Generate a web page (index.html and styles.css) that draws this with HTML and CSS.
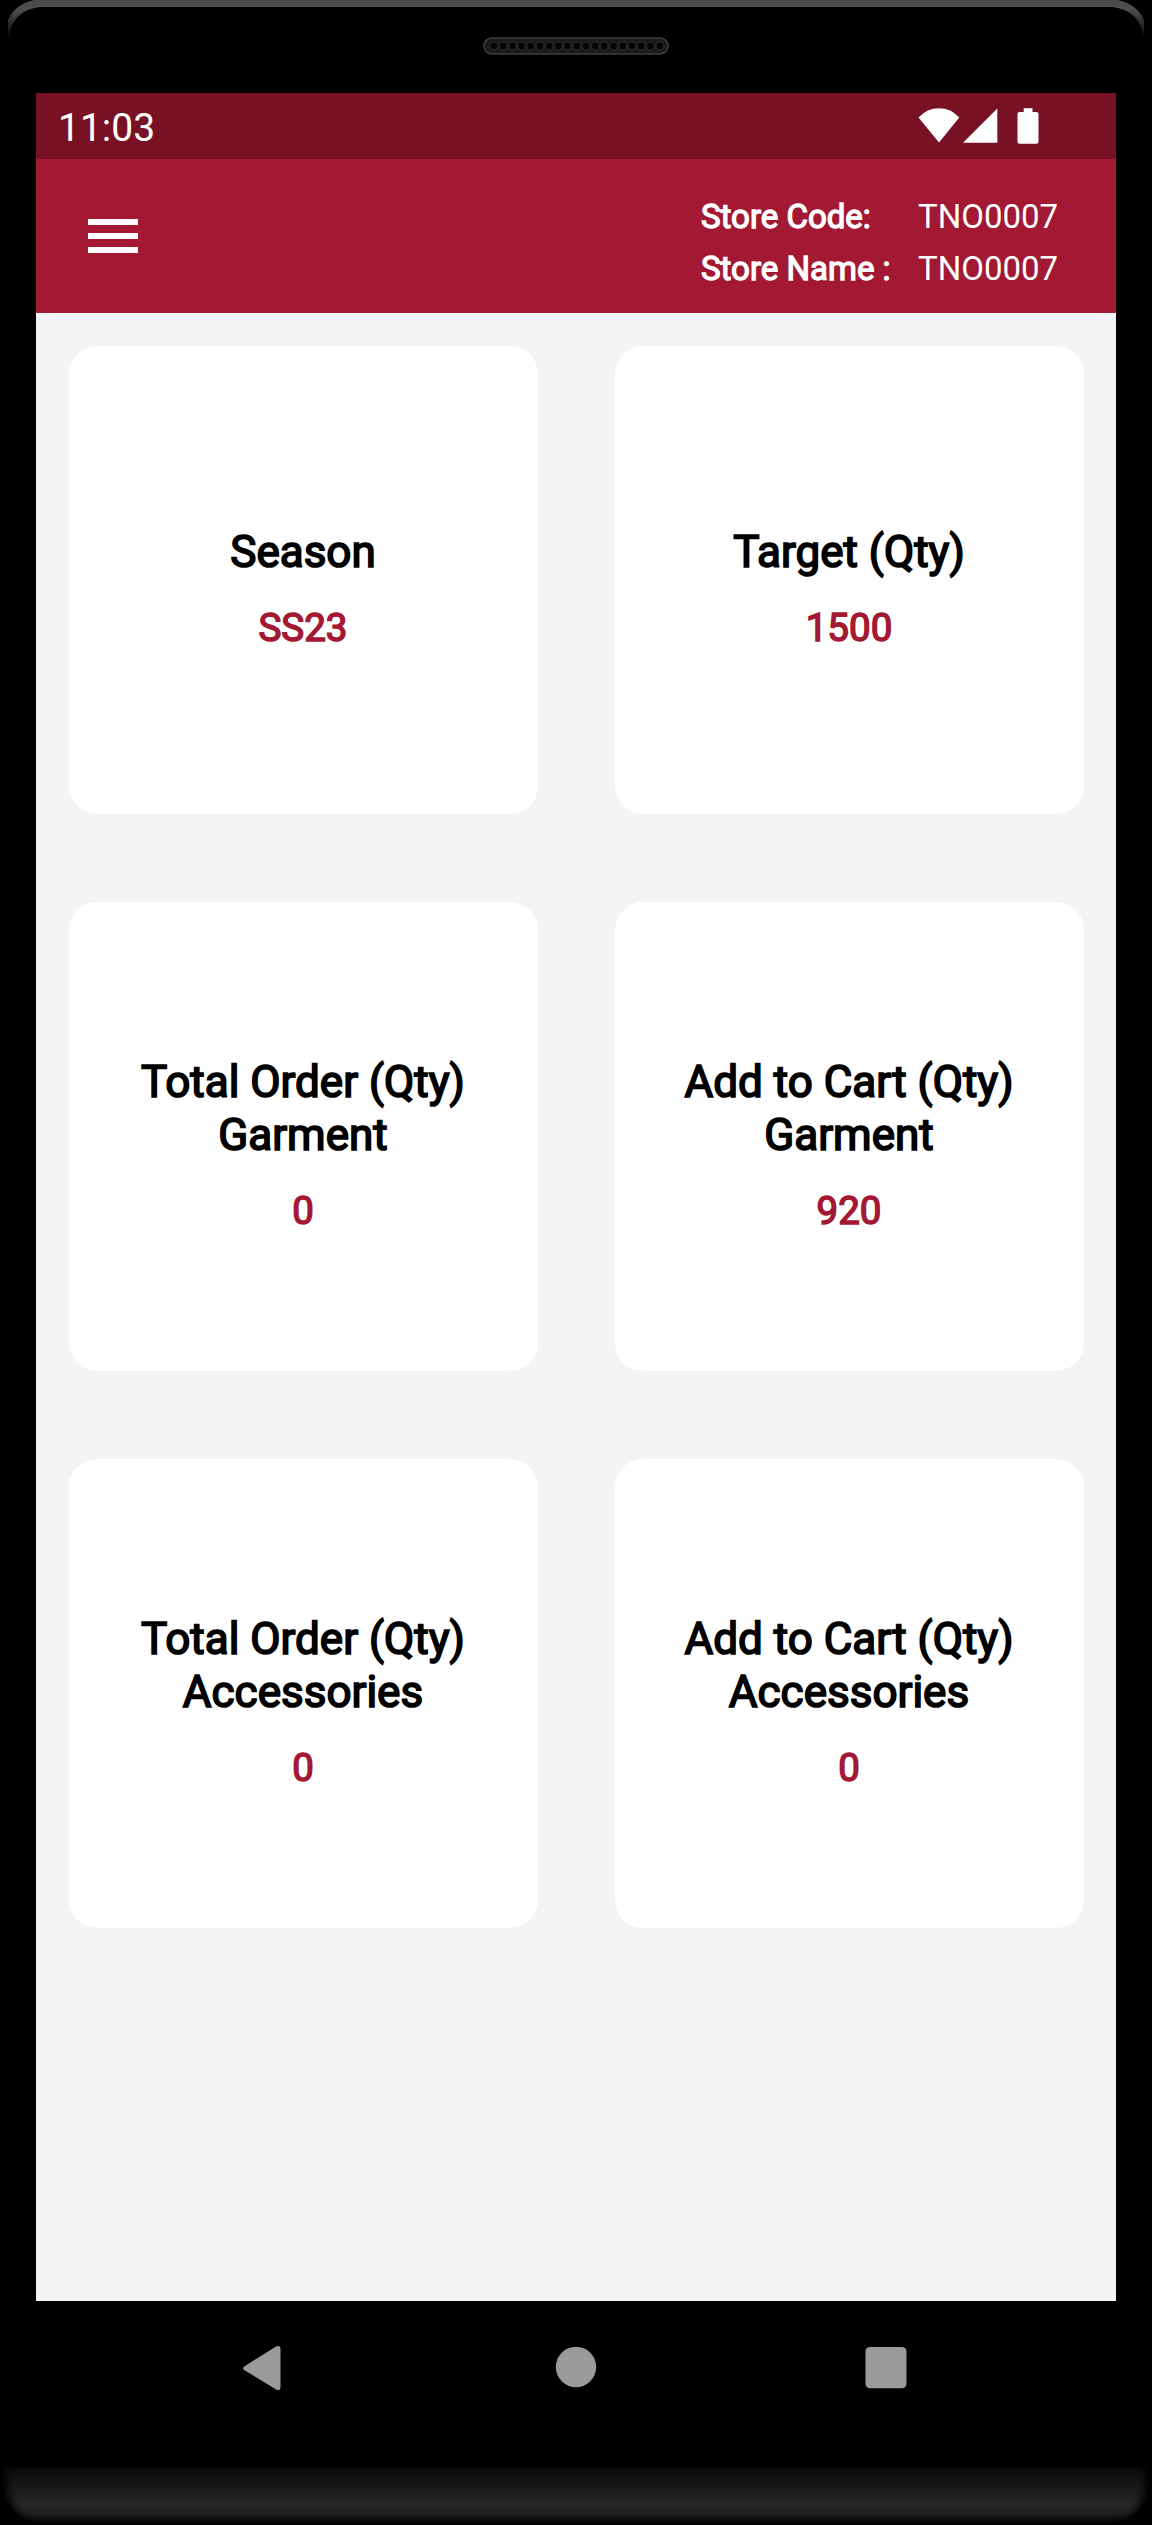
FILE: index.html
```html
<!DOCTYPE html>
<html lang="en">
<head>
<meta charset="utf-8">
<title>Store dashboard</title>
<link rel="stylesheet" href="styles.css">
</head>
<body>
<div class="device">
  <div class="bezel-top">
    <svg class="bezel-edge" width="1152" height="42" viewBox="0 0 1152 42" aria-hidden="true">
      <defs>
        <linearGradient id="edge" x1="0" y1="0" x2="0" y2="42" gradientUnits="userSpaceOnUse">
          <stop offset="0" stop-color="#484848"/>
          <stop offset="0.2" stop-color="#505050"/>
          <stop offset="0.5" stop-color="#303030"/>
          <stop offset="0.95" stop-color="#000"/>
        </linearGradient>
      </defs>
      <path fill="url(#edge)" d="M8 40V20Q15 4 34 0H1118Q1137 4 1144 20V40Q1141 10 1112 7H40Q12 10 8 40Z"/>
    </svg>
    <svg class="speaker" width="186" height="18" viewBox="0 0 186 18" aria-hidden="true">
      <defs>
        <pattern id="holes" x="6.4" y="0" width="9.2" height="18" patternUnits="userSpaceOnUse">
          <circle cx="4.6" cy="9" r="3.9" fill="#030303" stroke="#303030" stroke-width="1"/>
        </pattern>
      </defs>
      <rect x="1" y="1" width="184" height="16" rx="8" fill="#1a1a1a" stroke="#3c3c3c" stroke-width="1.6"/>
      <rect x="6.4" y="0" width="174.8" height="18" fill="url(#holes)"/>
    </svg>
  </div>

  <main class="screen">
    <div class="status-bar">
      <span class="clock">11:03</span>
      <svg class="status-icons" width="122" height="38" viewBox="0 0 122 38" fill="#fff" aria-hidden="true">
        <path d="M0.5 10.5Q9 1.2 21 1.2T41.3 10.5L21 35.4Z"/>
        <path d="M45 35.8L79.3 1.5V35.8Z"/>
        <path d="M105.700 1.300H114.500V5H118.500Q120.500 5 120.500 7V34.500Q120.500 36.700 118.500 36.700H101.500Q99.500 36.700 99.500 34.500V7Q99.500 5 101.500 5H105.700Z"/>
      </svg>
    </div>

    <header class="app-bar">
      <svg class="menu-icon" width="50" height="34" viewBox="0 0 50 34" fill="#fff" aria-hidden="true">
        <path d="M0 0H50V6H0ZM0 14H50V20H0ZM0 28H50V34H0Z"/>
      </svg>
      <dl class="store">
        <dt>Store Code:</dt><dd>TNO0007</dd>
        <dt>Store Name :</dt><dd>TNO0007</dd>
      </dl>
    </header>

    <section class="cards">
      <article class="card"><h2>Season</h2><p>SS23</p></article>
      <article class="card"><h2>Target (Qty)</h2><p>1500</p></article>
      <article class="card"><h2>Total Order (Qty)<br>Garment</h2><p>0</p></article>
      <article class="card"><h2>Add to Cart (Qty)<br>Garment</h2><p>920</p></article>
      <article class="card"><h2>Total Order (Qty)<br>Accessories</h2><p>0</p></article>
      <article class="card"><h2>Add to Cart (Qty)<br>Accessories</h2><p>0</p></article>
    </section>
  </main>

  <nav class="nav-bar">
    <svg class="back" width="40" height="46" viewBox="0 0 40 46" aria-hidden="true"><path d="M3 21L34 1.500Q38.500 -0.500 38.500 4V42Q38.500 46.500 34 44.500L3 25.500Q-1 23 3 21Z"/></svg>
    <svg width="42" height="46" viewBox="0 0 42 46" aria-hidden="true"><circle cx="21" cy="22" r="20.200"/></svg>
    <svg width="42" height="46" viewBox="0 0 42 46" aria-hidden="true"><rect x="0.500" y="2" width="41" height="41.300" rx="4.500"/></svg>
  </nav>
  <div class="chin"></div>
</div>
</body>
</html>
```

FILE: styles.css
```css
* {
  box-sizing: border-box;
  margin: 0;
  padding: 0;
}

body {
  background: #000;
  font-family: Roboto, "Liberation Sans", sans-serif;
}

svg {
  display: block;
  flex: none;
}

.device {
  width: 1152px;
  height: 2525px;
  background: #000;
  display: flex;
  flex-direction: column;
}

.bezel-top {
  height: 93px;
  display: flex;
  flex-direction: column;
  align-items: center;
}

.bezel-edge {
  margin-bottom: -5px;
}

.screen {
  width: 1080px;
  height: 2208px;
  margin: 0 36px;
  background: #f3f4f6;
}

.status-bar {
  height: 66px;
  padding: 0 76px 0 22px;
  background: #781124;
  color: #fff;
  display: flex;
  justify-content: space-between;
}

.clock {
  font-size: 39px;
  line-height: 70px;
}

.status-icons {
  margin-top: 14px;
}

.app-bar {
  height: 154px;
  padding: 0 58px 0 52px;
  background: #a31832;
  color: #fff;
  display: flex;
  justify-content: space-between;
}

.menu-icon {
  margin-top: 60px;
}

.store {
  display: grid;
  grid-template-columns: 217px 140px;
  grid-auto-rows: 52px;
  padding-top: 32px;
  font-size: 33px;
  line-height: 52px;
  white-space: nowrap;
}

.store dt {
  -webkit-text-stroke: 1.3px currentColor;
}

.cards {
  display: grid;
  grid-template-columns: 469px 469px;
  grid-auto-rows: 468.8px;
  gap: 88px 77px;
  padding: 32.7px 32.5px 0;
}

.card {
  background: #fff;
  border-radius: 28px;
  padding-top: 16px;
  display: flex;
  flex-direction: column;
  align-items: center;
  justify-content: center;
  gap: 25px;
  text-align: center;
}

.card h2 {
  font-size: 44px;
  font-weight: 400;
  line-height: 53px;
  color: #000;
  -webkit-text-stroke: 1.7px currentColor;
}

.card p {
  font-size: 38.5px;
  line-height: 47px;
  color: #a31832;
  -webkit-text-stroke: 1.5px currentColor;
}

.nav-bar {
  height: 166px;
  padding: 44px 245px 0 242px;
  display: flex;
  justify-content: space-between;
  fill: #9a9a9a;
}

.back {
  margin-right: 4px;
}

.chin {
  height: 57px;
  margin: 0 3px;
  border-radius: 0 0 42px 42px;
  background: linear-gradient(#0b0b0b, #1a1a1a 40%, #262626 65%, #222 80%, #050505 98%, #000);
  box-shadow: inset 8px 0 8px -4px #000, inset -8px 0 8px -4px #000;
}
```
